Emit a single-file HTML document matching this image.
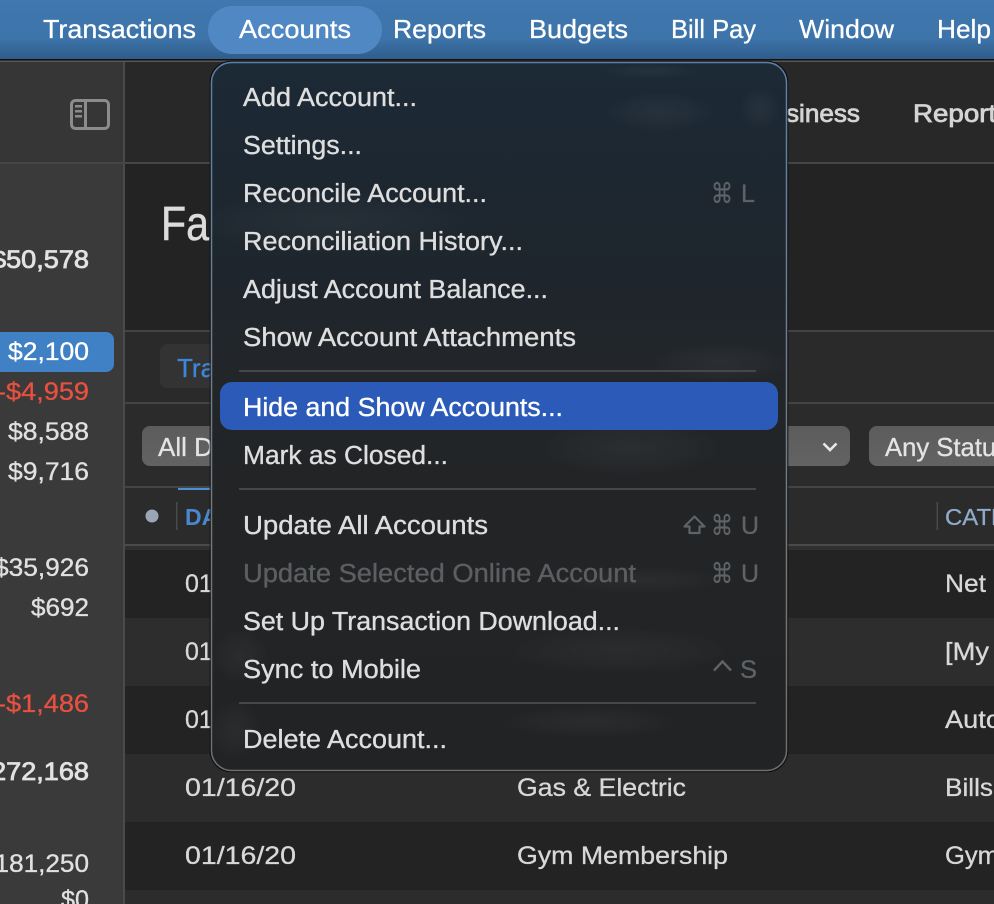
<!DOCTYPE html>
<html>
<head>
<meta charset="utf-8">
<style>
html,body{margin:0;padding:0;background:#222;width:994px;height:904px;overflow:hidden}
svg{display:block}
text{font-family:"Liberation Sans",sans-serif;white-space:pre}
.m{font-size:26px;fill:#fff;stroke:#fff;stroke-width:.3px}
.i{font-size:25.5px;fill:#dedede;stroke:#dedede;stroke-width:.35px}
.s{font-size:25px;fill:#e0e0e0;stroke:#e0e0e0;stroke-width:.35px}
.b{font-size:25px;fill:#e2e2e2;stroke:#e2e2e2;stroke-width:.8px}
.r{font-size:25px;fill:#e8503f;stroke:#e8503f;stroke-width:.3px}
.t{font-size:25px;fill:#d8d8d8;stroke:#d8d8d8;stroke-width:.3px}
.k{font-size:25px;fill:#5e6367;stroke:#5e6367;stroke-width:.3px}
.c{font-family:"DejaVu Sans",sans-serif;font-size:28px;fill:#5e6367;stroke:#5e6367;stroke-width:.2px}
</style>
</head>
<body>
<svg width="994" height="904" viewBox="0 0 994 904" xmlns="http://www.w3.org/2000/svg">
<defs>
<linearGradient id="bar" x1="0" y1="0" x2="0" y2="1">
<stop offset="0" stop-color="#3f77ae"/><stop offset=".65" stop-color="#3d74aa"/><stop offset="1" stop-color="#2f5c8b"/>
</linearGradient>
<linearGradient id="btn" x1="0" y1="0" x2="0" y2="1">
<stop offset="0" stop-color="#5c5c5c"/><stop offset="1" stop-color="#636363"/>
</linearGradient>
<linearGradient id="menu" x1="0" y1="0" x2="0" y2="1">
<stop offset="0" stop-color="#1c2a36"/><stop offset=".15" stop-color="#1d2731"/><stop offset=".32" stop-color="#1f252c"/><stop offset=".45" stop-color="#232629"/><stop offset=".6" stop-color="#222426"/><stop offset="1" stop-color="#222324"/>
</linearGradient>
<linearGradient id="edge" x1="0" y1="0" x2="0" y2="1">
<stop offset="0" stop-color="#5c80a6"/><stop offset=".35" stop-color="#6d7f92"/><stop offset=".7" stop-color="#75787c"/><stop offset="1" stop-color="#6e6e6e"/>
</linearGradient>
<radialGradient id="g"><stop offset="0" stop-color="#fff" stop-opacity=".04"/><stop offset=".6" stop-color="#fff" stop-opacity=".02"/><stop offset="1" stop-color="#fff" stop-opacity="0"/></radialGradient>
<clipPath id="mc"><rect x="211" y="62" width="576" height="709" rx="20"/></clipPath>
</defs>

<!-- base panels -->
<rect width="994" height="904" fill="#232323"/>
<rect x="0" y="61" width="123" height="843" fill="#3a3a3a"/>
<rect x="0" y="61" width="123" height="102" fill="#363636"/>
<rect x="123" y="61" width="2" height="843" fill="#4a4a4a"/>
<rect x="125" y="61" width="869" height="102" fill="#282828"/>
<rect x="125" y="331" width="869" height="72" fill="#2a2a2a"/>
<rect x="125" y="403" width="869" height="84" fill="#2b2b2b"/>
<rect x="125" y="487" width="869" height="58" fill="#2b2b2b"/>
<rect x="125" y="550" width="869" height="68" fill="#232323"/>
<rect x="125" y="618" width="869" height="68" fill="#2d2d2d"/>
<rect x="125" y="686" width="869" height="68" fill="#232323"/>
<rect x="125" y="754" width="869" height="68" fill="#2c2c2c"/>
<rect x="125" y="822" width="869" height="68" fill="#232323"/>
<rect x="125" y="890" width="869" height="14" fill="#2c2c2c"/>
<rect x="0" y="162" width="994" height="2" fill="#454545"/>
<rect x="125" y="330" width="869" height="2" fill="#444"/>
<rect x="125" y="402" width="869" height="2" fill="#444"/>
<rect x="125" y="486" width="869" height="2" fill="#444"/>
<rect x="125" y="544" width="869" height="2" fill="#4a4a4a"/>
<rect x="125" y="546" width="869" height="4" fill="#303030"/>

<!-- menu bar -->
<rect width="994" height="59" fill="url(#bar)"/>
<rect y="59" width="994" height="1.5" fill="#111"/>
<rect y="60.5" width="994" height="1.5" fill="#585858"/>
<rect x="208" y="6" width="174" height="48" rx="24" fill="#5088c4"/>
<text class="m" x="43" y="38" textLength="153" lengthAdjust="spacingAndGlyphs">Transactions</text>
<text class="m" x="239" y="38" textLength="112" lengthAdjust="spacingAndGlyphs">Accounts</text>
<text class="m" x="393" y="38" textLength="93" lengthAdjust="spacingAndGlyphs">Reports</text>
<text class="m" x="529" y="38" textLength="99" lengthAdjust="spacingAndGlyphs">Budgets</text>
<text class="m" x="671" y="38" textLength="85" lengthAdjust="spacingAndGlyphs">Bill Pay</text>
<text class="m" x="799" y="38" textLength="95" lengthAdjust="spacingAndGlyphs">Window</text>
<text class="m" x="937" y="38" textLength="54" lengthAdjust="spacingAndGlyphs">Help</text>

<!-- sidebar icon -->
<rect x="71.5" y="100.5" width="37" height="28" rx="4" fill="none" stroke="#8c8c8c" stroke-width="3"/>
<rect x="84" y="101" width="3" height="27" fill="#8c8c8c"/>
<rect x="75" y="105" width="7" height="2.5" fill="#8c8c8c"/>
<rect x="75" y="110" width="7" height="2.5" fill="#8c8c8c"/>
<rect x="75" y="115" width="7" height="2.5" fill="#8c8c8c"/>

<!-- sidebar values -->
<text class="b" x="-9" y="268" textLength="98" lengthAdjust="spacingAndGlyphs">$50,578</text>
<path d="M0 332H106a8 8 0 0 1 8 8V364a8 8 0 0 1-8 8H0Z" fill="#4080c4"/>
<text class="s" x="8" y="360" textLength="81" lengthAdjust="spacingAndGlyphs" style="fill:#fff;stroke:#fff">$2,100</text>
<text class="r" x="-3" y="400" textLength="92" lengthAdjust="spacingAndGlyphs">-$4,959</text>
<text class="s" x="8" y="440" textLength="81" lengthAdjust="spacingAndGlyphs">$8,588</text>
<text class="s" x="8" y="480" textLength="81" lengthAdjust="spacingAndGlyphs">$9,716</text>
<text class="s" x="-6" y="576" textLength="95" lengthAdjust="spacingAndGlyphs">$35,926</text>
<text class="s" x="31" y="616" textLength="58" lengthAdjust="spacingAndGlyphs">$692</text>
<text class="r" x="-3" y="712" textLength="92" lengthAdjust="spacingAndGlyphs">-$1,486</text>
<text class="b" x="-24" y="780" textLength="113" lengthAdjust="spacingAndGlyphs">$272,168</text>
<text class="s" x="-20" y="872" textLength="109" lengthAdjust="spacingAndGlyphs">$181,250</text>
<text class="s" x="61" y="908" textLength="28" lengthAdjust="spacingAndGlyphs">$0</text>

<!-- toolbar -->
<text x="786" y="122" font-size="25" fill="#d4d4d4" stroke="#d4d4d4" stroke-width=".8" textLength="74" lengthAdjust="spacingAndGlyphs">siness</text>
<text x="913" y="122" font-size="25" fill="#d4d4d4" stroke="#d4d4d4" stroke-width=".8" textLength="97" lengthAdjust="spacingAndGlyphs">Reports</text>

<!-- title -->
<text x="161" y="240" font-size="48" fill="#dcdcdc" stroke="#dcdcdc" stroke-width=".5" textLength="48" lengthAdjust="spacingAndGlyphs">Fa</text>

<!-- tab -->
<rect x="160" y="344" width="100" height="44" rx="7" fill="#333"/>
<text x="177" y="377" font-size="26" fill="#3f86d8" stroke="#3f86d8" stroke-width=".3">Tra</text>

<!-- filters -->
<rect x="142" y="426" width="708" height="40" rx="8" fill="url(#btn)"/>
<text x="158" y="456" font-size="26" fill="#e4e4e4" stroke="#e4e4e4" stroke-width=".3">All D</text>
<path d="M823.5 443.5L830 450L836.5 443.5" fill="none" stroke="#e8e8e8" stroke-width="2.6"/>
<rect x="869" y="426" width="140" height="40" rx="8" fill="url(#btn)"/>
<text x="885" y="456" font-size="26" fill="#e4e4e4" stroke="#e4e4e4" stroke-width=".3" textLength="124" lengthAdjust="spacingAndGlyphs">Any Status</text>

<!-- header -->
<circle cx="152" cy="516" r="6.5" fill="#9aa5b5"/>
<rect x="176" y="502" width="1.5" height="28" fill="#4a4a4a"/>
<rect x="178" y="488" width="34" height="2" fill="#4a90d9"/>
<text x="185" y="525" font-size="23" font-weight="bold" fill="#4a87cf">DA</text>
<rect x="936.5" y="502" width="1.5" height="28" fill="#4a4a4a"/>
<text x="945" y="525" font-size="23" fill="#8fabca" stroke="#8fabca" stroke-width=".3" textLength="62" lengthAdjust="spacingAndGlyphs">CATE</text>

<!-- rows -->
<text class="t" x="185" y="592">01</text>
<text class="t" x="185" y="660">01</text>
<text class="t" x="185" y="728">01</text>
<text class="t" x="185" y="796" textLength="111" lengthAdjust="spacingAndGlyphs">01/16/20</text>
<text class="t" x="185" y="864" textLength="111" lengthAdjust="spacingAndGlyphs">01/16/20</text>
<text class="t" x="517" y="796" textLength="169" lengthAdjust="spacingAndGlyphs">Gas &amp; Electric</text>
<text class="t" x="517" y="864" textLength="211" lengthAdjust="spacingAndGlyphs">Gym Membership</text>
<text class="t" x="945" y="592" textLength="41" lengthAdjust="spacingAndGlyphs">Net</text>
<text class="t" x="945" y="660" textLength="44" lengthAdjust="spacingAndGlyphs">[My</text>
<text class="t" x="945" y="728" textLength="56" lengthAdjust="spacingAndGlyphs">Auto</text>
<text class="t" x="945" y="796" textLength="48" lengthAdjust="spacingAndGlyphs">Bills</text>
<text class="t" x="945" y="864" textLength="54" lengthAdjust="spacingAndGlyphs">Gym</text>

<!-- menu -->
<rect x="210.2" y="61.2" width="577.6" height="710.6" rx="21" fill="none" stroke="#0c0c0c" stroke-width="1"/>
<rect x="211.5" y="62.5" width="575" height="708" rx="20" fill="url(#menu)" stroke="url(#edge)" stroke-width="1.5"/>
<g clip-path="url(#mc)">
<ellipse cx="330" cy="222" rx="140" ry="32" fill="url(#g)"/>
<ellipse cx="660" cy="112" rx="55" ry="20" fill="url(#g)"/>
<ellipse cx="760" cy="108" rx="20" ry="22" fill="url(#g)"/>
<ellipse cx="650" cy="71" rx="50" ry="8" fill="url(#g)"/>
<ellipse cx="630" cy="448" rx="90" ry="28" fill="url(#g)"/>
<ellipse cx="720" cy="362" rx="70" ry="20" fill="url(#g)"/>
<ellipse cx="240" cy="655" rx="30" ry="28" fill="url(#g)"/>
<ellipse cx="235" cy="730" rx="26" ry="30" fill="url(#g)"/>
<ellipse cx="620" cy="650" rx="120" ry="24" fill="url(#g)"/>
<ellipse cx="590" cy="722" rx="90" ry="16" fill="url(#g)"/>
<ellipse cx="640" cy="580" rx="90" ry="14" fill="url(#g)"/>
</g>

<rect x="239" y="370" width="517" height="2" fill="#44484d"/>
<rect x="239" y="488" width="517" height="2" fill="#45484a"/>
<rect x="239" y="702" width="517" height="2" fill="#474849"/>
<rect x="220" y="382" width="558" height="48" rx="12" fill="#2c5ab8"/>

<text class="i" x="243" y="106" textLength="174" lengthAdjust="spacingAndGlyphs">Add Account...</text>
<text class="i" x="243" y="154" textLength="119" lengthAdjust="spacingAndGlyphs">Settings...</text>
<text class="i" x="243" y="202" textLength="244" lengthAdjust="spacingAndGlyphs">Reconcile Account...</text>
<text class="i" x="243" y="250" textLength="280" lengthAdjust="spacingAndGlyphs">Reconciliation History...</text>
<text class="i" x="243" y="298" textLength="305" lengthAdjust="spacingAndGlyphs">Adjust Account Balance...</text>
<text class="i" x="243" y="346" textLength="333" lengthAdjust="spacingAndGlyphs">Show Account Attachments</text>
<text class="i" x="243" y="416" textLength="320" lengthAdjust="spacingAndGlyphs" style="fill:#fff;stroke:#fff">Hide and Show Accounts...</text>
<text class="i" x="243" y="464" textLength="205" lengthAdjust="spacingAndGlyphs">Mark as Closed...</text>
<text class="i" x="243" y="534" textLength="245" lengthAdjust="spacingAndGlyphs">Update All Accounts</text>
<text class="i" x="243" y="582" textLength="393" lengthAdjust="spacingAndGlyphs" style="fill:#5c5f62;stroke:#5c5f62">Update Selected Online Account</text>
<text class="i" x="243" y="630" textLength="377" lengthAdjust="spacingAndGlyphs">Set Up Transaction Download...</text>
<text class="i" x="243" y="678" textLength="178" lengthAdjust="spacingAndGlyphs">Sync to Mobile</text>
<text class="i" x="243" y="748" textLength="204" lengthAdjust="spacingAndGlyphs">Delete Account...</text>

<!-- shortcuts -->
<text class="c" x="711" y="203" textLength="22" lengthAdjust="spacingAndGlyphs">⌘</text>
<text class="k" x="741" y="202">L</text>
<path d="M694.5 516.5L704.5 526.5H699.5V533H689.5V526.5H684.5Z" fill="none" stroke="#5e6367" stroke-width="2.2" stroke-linejoin="round"/>
<text class="c" x="711" y="535" textLength="22" lengthAdjust="spacingAndGlyphs">⌘</text>
<text class="k" x="741" y="534" textLength="18" lengthAdjust="spacingAndGlyphs">U</text>
<text class="c" x="711" y="583" textLength="22" lengthAdjust="spacingAndGlyphs">⌘</text>
<text class="k" x="741" y="582" textLength="18" lengthAdjust="spacingAndGlyphs">U</text>
<path d="M714 670.5L722.5 661.5L731 670.5" fill="none" stroke="#5e6367" stroke-width="2.4"/>
<text class="k" x="740" y="678" textLength="17" lengthAdjust="spacingAndGlyphs">S</text>
</svg>
</body>
</html>
